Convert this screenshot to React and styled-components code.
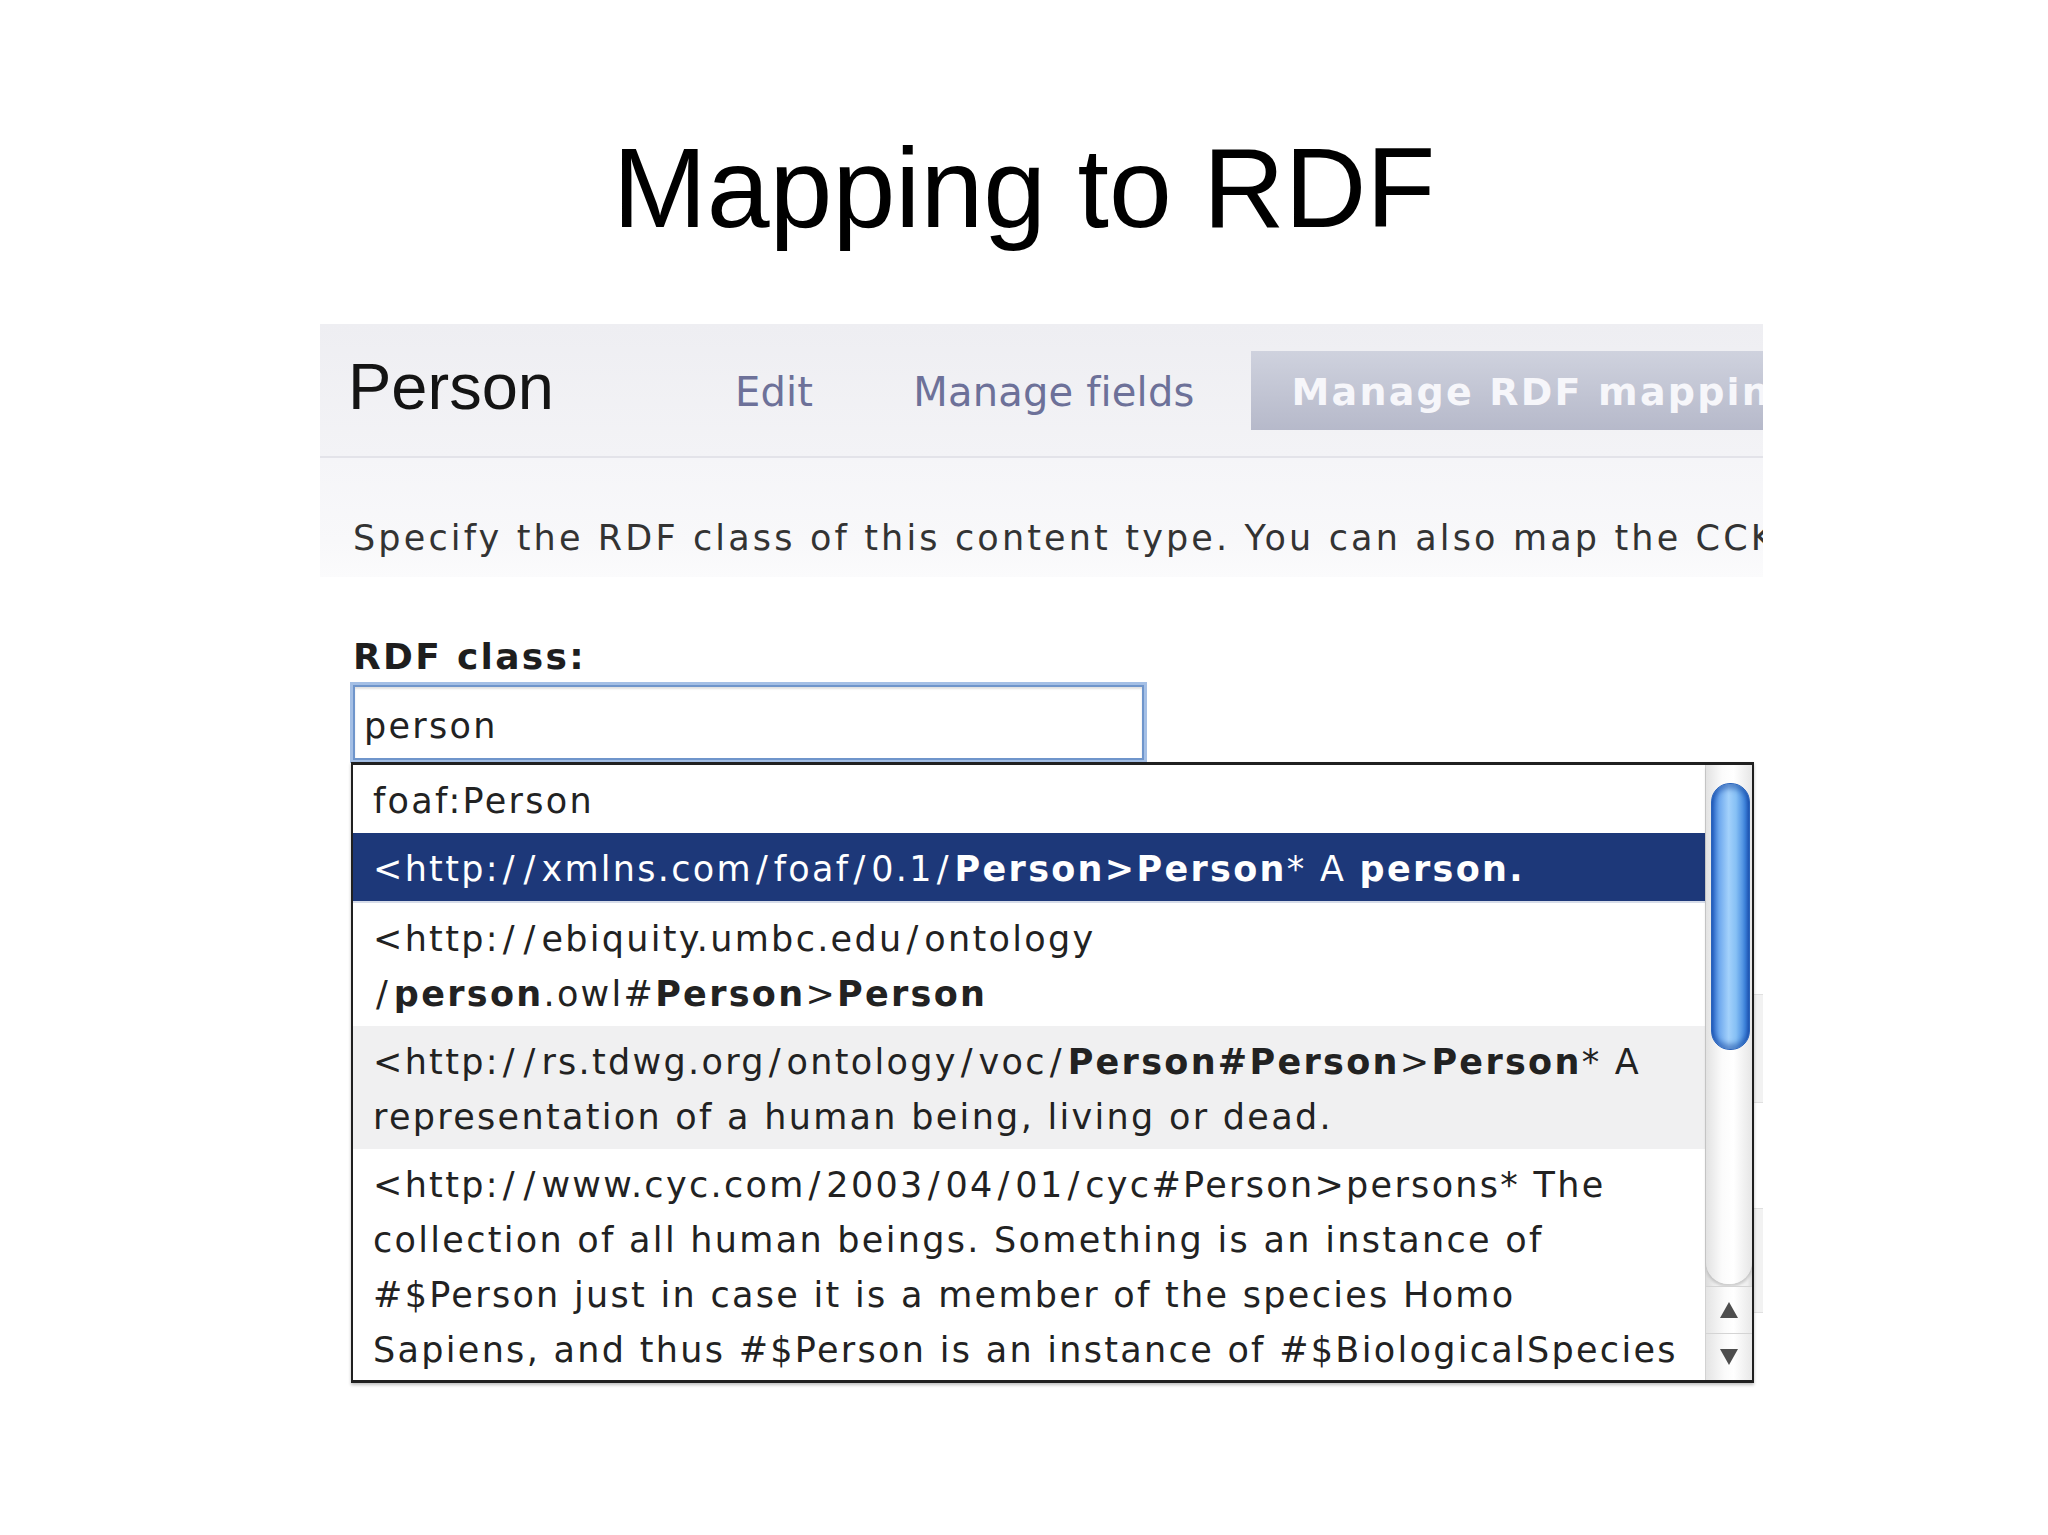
import React from "react";
import styled, { createGlobalStyle, css } from "styled-components";

const GlobalStyle = createGlobalStyle`
  html, body { margin: 0; padding: 0; background: #ffffff; }
  * { box-sizing: border-box; }
`;

const uiFont = css`
  font-family: "DejaVu Sans", Verdana, sans-serif;
  font-size: 35px;
  letter-spacing: 2.3px;
`;

const Slide = styled.div`
  width: 2048px;
  min-height: 1535px;
  background: #ffffff;
  padding-top: 132px;
`;

const Title = styled.h1`
  margin: 0;
  font-family: "Liberation Sans", Arial, sans-serif;
  font-weight: 400;
  font-size: 113px;
  line-height: 113px;
  color: #000;
  text-align: center;
`;

const Panel = styled.section`
  margin: 79px 0 0 320px;
  width: 1443px;
  overflow: hidden;
  background: #ffffff;
`;

const Header = styled.header`
  display: flex;
  align-items: flex-start;
  padding: 27px 0 26px 28px;
  background: linear-gradient(#eeeef2, #f3f3f6);
  border-bottom: 2px solid #e3e3e9;
  white-space: nowrap;
`;

const PageName = styled.h2`
  margin: 3px 149px 0 0;
  font-family: "Liberation Sans", Arial, sans-serif;
  font-weight: 400;
  font-size: 65px;
  line-height: 65px;
  color: #141414;
`;

const Tabs = styled.nav`
  display: flex;
  gap: 36px;
  flex: none;
`;

const Tab = styled.span`
  display: block;
  height: 79px;
  margin-left: ${(p) => (p.$active ? "-12px" : "0")};
  padding: 0 ${(p) => (p.$active ? "60px 0 41px" : "32px")};
  font-family: "DejaVu Sans", Verdana, sans-serif;
  font-size: ${(p) => (p.$active ? "38px" : "40px")};
  font-weight: ${(p) => (p.$active ? 700 : 400)};
  letter-spacing: ${(p) => (p.$active ? "2.2px" : "0.2px")};
  line-height: 82px;
  color: ${(p) => (p.$active ? "#f6f6fa" : "#6d7199")};
  background: ${(p) =>
    p.$active ? "linear-gradient(#cfd2de, #b6b9ca)" : "transparent"};
`;

const Intro = styled.div`
  padding: 58px 0 17px 33px;
  background: linear-gradient(#f5f5f8, #f8f8fa 70%, #fbfbfc);
`;

const Description = styled.p`
  margin: 0;
  ${uiFont};
  letter-spacing: 3.15px;
  line-height: 44px;
  color: #333;
  white-space: nowrap;
`;

const Form = styled.div`
  padding: 58px 0 90px 33px;
`;

const Label = styled.label`
  display: block;
  font-family: "DejaVu Sans", Verdana, sans-serif;
  font-size: 36px;
  font-weight: 700;
  letter-spacing: 2.3px;
  line-height: 44px;
  color: #1e1e1e;
  margin-bottom: 6px;
`;

const Field = styled.div`
  position: relative;
  width: 791px;
`;

const Input = styled.div`
  height: 75px;
  padding: 8px 0 0 9px;
  border: 2px solid #6f95cb;
  box-shadow: 0 0 0 3px rgba(134, 170, 220, 0.75), inset 0 2px 2px rgba(0, 0, 0, 0.12);
  background: #fff;
  ${uiFont};
  line-height: 62px;
  color: #222;
`;

const Suggestions = styled.div`
  position: absolute;
  left: -2px;
  top: calc(100% + 2px);
  width: 1403px;
  height: 621px;
  display: flex;
  background: #fff;
  border: 2px solid #202020;
  border-top-width: 3px;
  border-bottom-width: 3px;
  box-shadow: 0 2px 3px rgba(0, 0, 0, 0.25);
  z-index: 2;
`;

const List = styled.ul`
  flex: 1;
  margin: 0;
  padding: 0;
  list-style: none;
  overflow: hidden;
`;

const toneStyles = {
  plain: css`background: #fff; color: #222;`,
  selected: css`background: #1d3879; color: #fff; border-bottom: 2px solid #d6dce9;`,
  muted: css`background: #f0f0f1; color: #222;`,
};

const Row = styled.li`
  padding: 9px 0 4px 20px;
  ${uiFont};
  line-height: 55px;
  ${(p) => toneStyles[p.$tone || "plain"]};
`;

const Line = styled.span`
  display: block;
  white-space: nowrap;
`;

const B = styled.b`
  font-weight: 700;
`;

const Sep = styled.span`
  padding-left: 3px;
  letter-spacing: 6px;
`;

const Url = ({ children }) => {
  const parts = String(children).split(/(\/)/);
  return (
    <>
      {parts.map((part, i) =>
        part === "/" ? <Sep key={i}>/</Sep> : <React.Fragment key={i}>{part}</React.Fragment>
      )}
    </>
  );
};

const Scrollbar = styled.div`
  width: 47px;
  flex: none;
  display: flex;
  flex-direction: column;
  background: linear-gradient(to right, #dcdcdc, #f4f4f4 25%, #ffffff 55%, #eeeeee 90%, #d9d9d9);
  border-left: 1px solid #d2d2d2;
`;

const Track = styled.div`
  flex: 1;
  padding: 18px 2px 0 5px;
  border-radius: 0 0 22px 22px;
  background: linear-gradient(to right, #e2e2e2, #fbfbfb 35%, #ffffff 60%, #e6e6e6);
  box-shadow: 0 3px 3px rgba(0, 0, 0, 0.18);
  margin-bottom: 2px;
`;

const Thumb = styled.div`
  height: 267px;
  border-radius: 19px;
  border: 1px solid #2a63ba;
  background: linear-gradient(to right, #2f6fcf, #6fa9ee 20%, #a3d1fb 45%, #86c0f5 65%, #3f84dc 90%, #2a63c0);
  box-shadow: inset 0 5px 5px rgba(20, 70, 160, 0.5), inset 0 -5px 5px rgba(20, 70, 160, 0.5);
`;

const ArrowButton = styled.div`
  height: 47px;
  display: flex;
  align-items: center;
  justify-content: center;
  border-top: 1px solid #d4d4d4;
  background: linear-gradient(to right, #e4e4e4, #fafafa 40%, #ffffff 60%, #e8e8e8);
`;

const FieldTable = styled.div`
  margin: 234px -33px 0 0;
  display: flex;
  flex-direction: column;
`;

const TableRow = styled.div`
  height: ${(p) => p.$h}px;
  background: ${(p) => (p.$shaded ? "#f2f2f2" : "#ffffff")};
  border-top: 1px solid ${(p) => (p.$shaded ? "#e0e0e0" : "transparent")};
  border-bottom: 1px solid ${(p) => (p.$shaded ? "#e0e0e0" : "transparent")};
`;

const Arrow = ({ up }) => (
  <svg width="20" height="18" viewBox="0 0 20 18">
    <polygon points={up ? "10,1 19,17 1,17" : "1,1 19,1 10,17"} fill="#4d4d4d" />
  </svg>
);

export default function App() {
  return (
    <>
      <GlobalStyle />
      <Slide>
        <Title>Mapping to RDF</Title>
        <Panel>
          <Header>
            <PageName>Person</PageName>
            <Tabs>
              <Tab>Edit</Tab>
              <Tab>Manage fields</Tab>
              <Tab $active>Manage RDF mappings</Tab>
            </Tabs>
          </Header>
          <Intro>
            <Description>
              Specify the RDF class of this content type. You can also map the CCK fields to RDF properties.
            </Description>
          </Intro>
          <Form>
            <Label>RDF class:</Label>
            <Field>
              <Input>person</Input>
              <Suggestions>
                <List>
                  <Row>
                    <Line>foaf:Person</Line>
                  </Row>
                  <Row $tone="selected">
                    <Line>
                      &lt;<Url>http://xmlns.com/foaf/0.1/</Url>
                      <B>Person&gt;Person</B>* A <B>person.</B>
                    </Line>
                  </Row>
                  <Row>
                    <Line>
                      &lt;<Url>http://ebiquity.umbc.edu/ontology</Url>
                    </Line>
                    <Line>
                      <Sep>/</Sep>
                      <B>person</B>.owl#<B>Person</B>&gt;<B>Person</B>
                    </Line>
                  </Row>
                  <Row $tone="muted">
                    <Line>
                      &lt;<Url>http://rs.tdwg.org/ontology/voc/</Url>
                      <B>Person#Person</B>&gt;<B>Person</B>* A
                    </Line>
                    <Line>representation of a human being, living or dead.</Line>
                  </Row>
                  <Row>
                    <Line>
                      &lt;<Url>http://www.cyc.com/2003/04/01/cyc#Person</Url>&gt;persons* The
                    </Line>
                    <Line>collection of all human beings. Something is an instance of</Line>
                    <Line>#$Person just in case it is a member of the species Homo</Line>
                    <Line>Sapiens, and thus #$Person is an instance of #$BiologicalSpecies</Line>
                  </Row>
                </List>
                <Scrollbar>
                  <Track>
                    <Thumb />
                  </Track>
                  <ArrowButton>
                    <Arrow up />
                  </ArrowButton>
                  <ArrowButton>
                    <Arrow />
                  </ArrowButton>
                </Scrollbar>
              </Suggestions>
            </Field>
            <FieldTable>
              <TableRow $shaded $h={109} />
              <TableRow $h={105} />
              <TableRow $shaded $h={105} />
            </FieldTable>
          </Form>
        </Panel>
      </Slide>
    </>
  );
}
